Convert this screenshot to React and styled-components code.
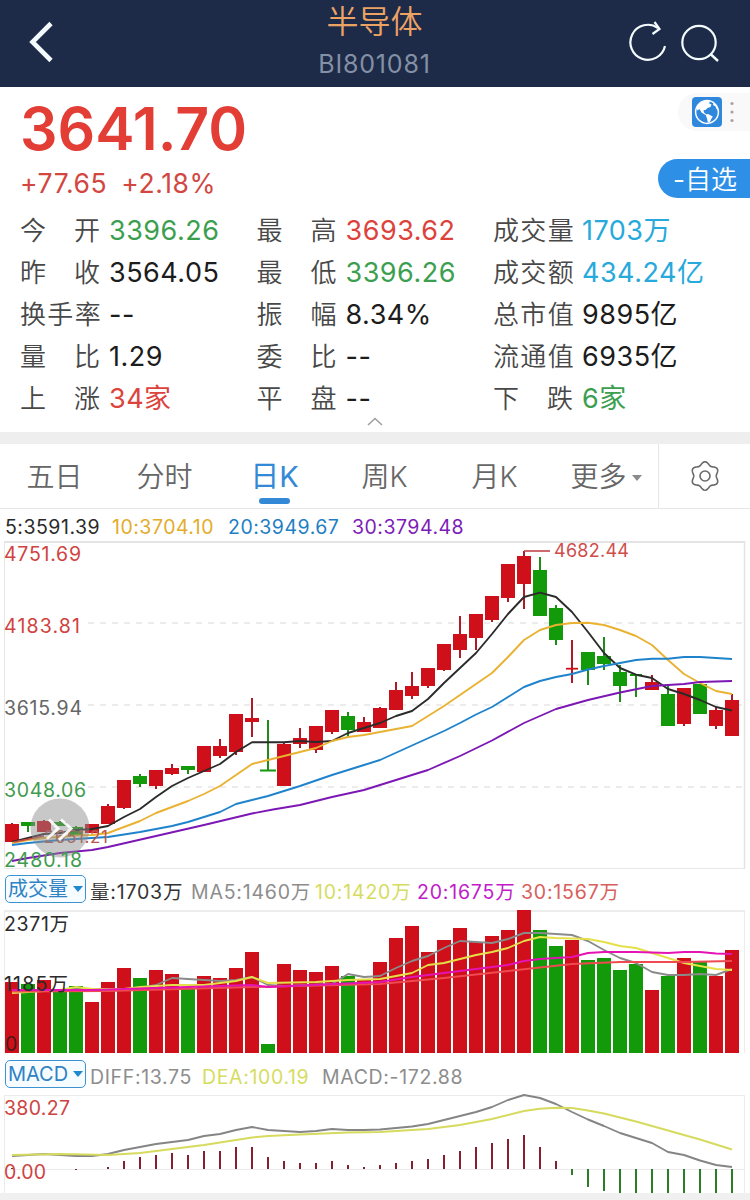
import React from "react";
import styled, { createGlobalStyle } from "styled-components";

const RED = "#cf0f19";
const GREEN = "#129a0a";

// [body top, body bottom, wick top, wick bottom, colour, body width]
const candles = [
  [824, 842, 823, 842, "r"],
  [822, 826, 822, 832, "g"],
  [821, 832, 820, 832, "r"],
  [822, 826, 821, 826, "g"],
  [827, 835, 826, 835, "g"],
  [824, 833, 824, 833, "r"],
  [806, 824, 804, 824, "r"],
  [780, 808, 780, 809, "r"],
  [776, 784, 774, 787, "g"],
  [770, 786, 770, 789, "r"],
  [768, 774, 764, 775, "r"],
  [766, 770, 766, 774, "g"],
  [746, 772, 746, 772, "r"],
  [746, 756, 739, 758, "r"],
  [714, 752, 714, 755, "r"],
  [718, 722, 698, 737, "r"],
  [769.5, 771.5, 720, 771, "g", 16],
  [744, 786, 742, 786, "r"],
  [738, 744, 728, 748, "r"],
  [726, 750, 726, 753, "r"],
  [710, 732, 710, 734, "r"],
  [716, 730, 712, 738, "g"],
  [722, 732, 717, 732, "r"],
  [708, 728, 707, 728, "r"],
  [690, 710, 682, 710, "r"],
  [686, 696, 672, 699, "r"],
  [668, 686, 668, 688, "r"],
  [644, 670, 644, 671, "r"],
  [634, 650, 616, 658, "r"],
  [614, 638, 614, 650, "r"],
  [596, 620, 596, 622, "r"],
  [564, 598, 564, 602, "r"],
  [556, 584, 551, 609, "r"],
  [570, 616, 557, 616, "g"],
  [608, 640, 605, 645, "g"],
  [667.8, 669.6, 640, 683, "r", 12],
  [652, 670, 652, 685, "g"],
  [656, 664, 637, 670, "g"],
  [672, 686, 665, 702, "g"],
  [674, 676, 674, 697, "g", 12],
  [682, 690, 675, 690, "r"],
  [694, 726, 684, 726, "g"],
  [688, 724, 688, 726, "r"],
  [684, 714, 684, 714, "g"],
  [710, 726, 707, 729, "r"],
  [700, 736, 694, 736, "r"],
];

const volumes = [
  982, 984, 980, 990, 986, 1002, 982, 968, 978, 970, 974, 988, 976, 978, 968,
  952, 1044, 964, 970, 972, 966, 976, 980, 962, 938, 926, 952, 940, 928, 942,
  936, 930, 910, 930, 946, 940, 960, 958, 970, 964, 990, 976, 958, 962, 976,
  950,
];

const macd = [
  1168, 1169, 1169, 1169, 1170, 1169, 1167, 1161, 1157, 1155, 1153, 1155, 1151,
  1151, 1147, 1147, 1157, 1161, 1163, 1163, 1161, 1165, 1167, 1165, 1163, 1161,
  1159, 1155, 1151, 1147, 1143, 1139, 1135, 1147, 1161, 1175, 1187, 1191, 1193,
  1193, 1193, 1193, 1193, 1193, 1193, 1193,
];

const priceLines = [
  {
    color: "#2b2b2b",
    points:
      "12,842 28,838 44,834 60,833 76,830 92,829 108,826 124,817 140,809 156,797 172,786 188,778 204,771 220,764 236,752 252,742.3 268,742.3 284,742.3 300,741 316,742 332,741 348,733 364,728 380,723 396,716 412,711 428,699 444,683 460,668 476,653 492,634 508,614 524,597 540,592.7 556,597 572,612 588,632 604,653 620,668 636,674.7 652,678 668,689 684,694 700,700 716,707 732,710.5",
  },
  {
    color: "#e9b232",
    points:
      "12,843 28,840 44,838 60,837 76,835.5 92,835 108,833 124,827 140,821 156,813 172,807 188,801 204,794 220,786 236,775 252,764 268,760 284,756 300,752 316,748 332,741 348,737 364,735 380,732 396,729 412,726 428,716 444,706 460,695 476,684 492,673 508,657 524,640 540,630 556,625 572,623 588,622.7 604,625 620,630 636,636 652,645 668,660 684,674 700,683 716,691 732,694",
  },
  {
    color: "#1f83cb",
    points:
      "12,845 28,843 60,840 92,838 108,837 140,832 172,826 188,822 220,812 236,804 252,800 268,796 284,791 300,786 332,775 348,770 364,765 380,760 412,745.5 444,731 460,723 476,714.5 492,707 508,697 524,687 540,681 556,677 572,674 588,669.5 604,666 620,663 636,660 652,658.7 668,658.7 684,657 700,657 716,658 732,659",
  },
  {
    color: "#7d17b4",
    points:
      "12,861 28,858 60,853 92,850 108,847 156,836 204,825 252,813.5 273,809.5 300,805 332,797 364,790 396,780 412,775 428,770 460,756 492,740.5 524,723 556,709 588,700 620,692.5 652,686 684,684 700,682 732,681",
  },
];

const volumeLines = [
  {
    color: "#8a8a8a",
    points:
      "12,991 60,991 76,989 92,990 108,991 140,988 156,985 172,978 204,980 220,981 236,980 252,977 268,985 284,986 332,984 348,974 364,977 380,976 396,968 412,961 428,956 444,948 460,941 476,942 492,943 508,939 524,933 540,933 556,934 572,935 588,941 604,950 620,958 636,963 652,972 668,975 684,975 700,974 716,975 732,969",
  },
  {
    color: "#e5e04a",
    points:
      "12,993 60,990 76,987 92,989 124,989 140,987 172,985 204,985 236,981 252,977 268,983 316,982 348,980 380,979 412,973 428,965 444,963 460,959 476,955 492,952 508,948 524,941 540,937 556,938 588,939 604,942 620,946 636,948 652,953 668,958 684,963 700,966 716,969 732,970",
  },
  {
    color: "#ef4a52",
    points:
      "12,991.5 108,991 252,987 380,984 444,978 508,971 572,964 620,962 684,962 732,961",
  },
  {
    color: "#e513b4",
    points:
      "12,990 92,990 252,985 268,987 380,982 412,977 444,973 476,969 508,965 524,961 540,959 572,957 588,953 604,952 636,952 668,953 684,952 700,952 716,953.5 732,954",
  },
];

const macdLines = [
  {
    color: "#858585",
    points:
      "12,1156 44,1154 76,1156 92,1156 108,1154 124,1150 140,1147 156,1144 172,1142 188,1140 204,1136 220,1134 236,1130 252,1127 268,1130 300,1132 316,1131 332,1129 348,1130 364,1130 380,1129.5 412,1126.5 428,1124 444,1120 476,1112 492,1107 508,1100 524,1095 540,1098 556,1104 572,1112 588,1119.5 604,1126 620,1133 636,1138 652,1143 668,1152 684,1155 700,1160.5 716,1165 732,1167",
  },
  {
    color: "#d6da5d",
    points:
      "12,1155 60,1154 108,1155 140,1153 172,1149 204,1145 236,1140 252,1137.5 268,1136 300,1134.5 348,1132.5 380,1132 428,1129 460,1125 492,1119 524,1111 540,1108.7 556,1107.7 572,1108 588,1110.5 604,1113.5 636,1121.5 668,1130.5 700,1139.5 732,1149.5",
  },
];

const quotes = [
  ["今 开", "3396.26", "green"],
  ["最 高", "3693.62", "red"],
  ["成 交 量", "1703万", "blue"],
  ["昨 收", "3564.05"],
  ["最 低", "3396.26", "green"],
  ["成 交 额", "434.24亿", "blue"],
  ["换 手 率", "--"],
  ["振 幅", "8.34%"],
  ["总 市 值", "9895亿"],
  ["量 比", "1.29"],
  ["委 比", "--"],
  ["流 通 值", "6935亿"],
  ["上 涨", "34家", "red"],
  ["平 盘", "--"],
  ["下 跌", "6家", "green"],
];

const valueColors = {
  red: "#dc433c",
  green: "#3c9f50",
  blue: "#28a9db",
};

const colX = (i) => 12 + i * 16;

const gearPoints = Array.from({ length: 72 }, (_, i) => {
  const a = (i * 5 * Math.PI) / 180;
  const r = 12.7 + 1.5 * Math.cos(6 * (a - Math.PI / 2));
  return `${(15 + r * Math.cos(a)).toFixed(2)},${(15 - r * Math.sin(a)).toFixed(2)}`;
}).join(" ");

function Lines({ data }) {
  return data.map((line) => (
    <polyline
      key={line.color}
      points={line.points}
      fill="none"
      stroke={line.color}
      strokeWidth="1.9"
      strokeLinejoin="round"
    />
  ));
}

function PriceChart() {
  return (
    <Chart height="330" viewBox="0 540 750 330">
      <path d="M4 542H745" stroke="#e4e4e4" strokeWidth="2" />
      <path d="M4.5 542V868.5H744.5" fill="none" stroke="#e8e8e8" />
      <path d="M744.5 541V869" stroke="#e4e4e4" strokeWidth="1.5" />
      {[623, 705, 787].map((y) => (
        <path key={y} d={`M88 ${y}H744`} stroke="#e6e6e6" strokeWidth="1.5" strokeDasharray="6 6" />
      ))}
      {candles.map(([top, bottom, high, low, c, w = 14], i) => {
        const fill = c === "r" ? RED : GREEN;
        return (
          <g key={i} fill={fill}>
            <rect x={colX(i) - 1} y={high} width="2" height={low - high} fill={c === "r" ? "#b01a24" : "#1f8c1a"} />
            <rect x={colX(i) - w / 2} y={top} width={w} height={bottom - top} />
          </g>
        );
      })}
      <Lines data={priceLines} />
      <path d="M524 551H550" stroke="#c2454a" strokeWidth="1.6" />
      <Label x="554" y="557" textLength="75" $size={18} fill="#cf4d49">4682.44</Label>
      <path d="M14 842L44 836" stroke="#c2454a" strokeWidth="1.4" />
      <Label x="44" y="843" textLength="64" $size={17} fill="#b8554f">2651.21</Label>
      <circle cx="60" cy="828" r="29.5" fill="#8c8c8c" fillOpacity="0.48" />
      <path d="M49 819.5L58 828.5L47 839M61 819.5L71 828.5L59 840" fill="none" stroke="#fff" strokeWidth="3" strokeOpacity="0.9" />
      <Label x="4" y="561" textLength="77" fill="#d0433f">4751.69</Label>
      <Label x="4" y="633" textLength="76" fill="#d0433f">4183.81</Label>
      <Label x="4" y="715" textLength="78" fill="#666">3615.94</Label>
      <Label x="4" y="797" textLength="82" fill="#3f9b50">3048.06</Label>
      <Label x="4" y="867" textLength="78" fill="#3f9b50">2480.18</Label>
    </Chart>
  );
}

function VolumeChart() {
  return (
    <Chart height="145" viewBox="0 910 750 145">
      <path d="M4 911H745" stroke="#ececec" strokeWidth="2" />
      <path d="M4.5 911V1053M744.5 911V1053" stroke="#ececec" />
      {volumes.map((y, i) => (
        <rect key={i} x={colX(i) - 7} y={y} width="14" height={1053 - y} fill={candles[i][4] === "r" ? RED : GREEN} />
      ))}
      <Lines data={volumeLines} />
      <Label x="4" y="931" textLength="65" fill="#2b2b2b">2371万</Label>
      <Label x="4" y="991" textLength="64" fill="#2b2b2b">1185万</Label>
      <Label x="5" y="1051" fill="#4a1a1a">0</Label>
    </Chart>
  );
}

function MacdChart() {
  return (
    <Chart height="99" viewBox="0 1094 750 99">
      <path d="M4 1095.5H745M4.5 1095V1193M744.5 1095V1193M4 1169.5H744" stroke="#ececec" />
      {macd.map((y, i) => (
        <rect
          key={i}
          x={colX(i) - 1}
          y={Math.min(y, 1169)}
          width="2"
          height={Math.abs(1169 - y)}
          fill={y > 1170 ? "#2c7c28" : "#84202f"}
        />
      ))}
      <Lines data={macdLines} />
      <Label x="4" y="1115" textLength="66" fill="#cc4441">380.27</Label>
      <Label x="4" y="1179" textLength="42" fill="#cc4441">0.00</Label>
    </Chart>
  );
}

function App() {
  return (
    <Page>
      <GlobalStyle />
      <Header>
        <svg width="32" height="44" viewBox="0 0 32 44">
          <path d="M27 3.5L8.5 22L27 40.5" fill="none" stroke="#f4fbff" strokeWidth="4.6" />
        </svg>
        <Heading>
          <Title>半导体</Title>
          <Code>BI801081</Code>
        </Heading>
        <svg width="92" height="44" viewBox="0 0 92 44">
          <g fill="none" stroke="#f4fbff" strokeWidth="2.2">
            <path d="M37 26A17.5 17.5 0 1 1 30 8" />
            <path d="M26.5 2L31.5 9L24.5 14" />
            <circle cx="71" cy="22.5" r="16.7" />
            <path d="M82.5 34L90 41" strokeWidth="2.4" />
          </g>
        </svg>
      </Header>
      <Summary>
        <div>
          <Price>3641.70</Price>
          <Change>
            <span>+77.65</span>
            <span>+2.18%</span>
          </Change>
        </div>
        <Side>
          <Widget>
            <Globe>
              <svg width="30" height="30" viewBox="0 0 30 30">
                <circle cx="15" cy="15" r="11.4" fill="none" stroke="#fff" strokeWidth="1.5" />
                <path d="M4.5 11Q7 5 13 3.7L18 4.2L17.2 6.5L19.5 7.5L18.5 10L15.5 11L13.5 13L11.5 13.2L12 15.5L14.5 17.5L13.2 17.8L9.5 15.5L7.5 12L5.5 13.5Z" fill="#fff" />
                <path d="M13.5 17.5L16 17L20.8 19.6L19.3 22L17.5 25.8L15.8 25.5L15 21.5Z" fill="#fff" />
                <path d="M21.5 6L25 9.5L26.3 14L24.5 12L23.5 9.5L21 8Z" fill="#fff" />
              </svg>
            </Globe>
            <svg width="4" height="22" viewBox="0 0 4 22" fill="#a9a3a3">
              <circle cx="2" cy="2.5" r="1.6" />
              <circle cx="2" cy="11" r="1.6" />
              <circle cx="2" cy="19.5" r="1.6" />
            </svg>
          </Widget>
          <Favorite>
            <b>-</b>自选
          </Favorite>
        </Side>
      </Summary>
      <Quotes>
        {quotes.map(([name, value, color], i) => (
          <Quote key={i}>
            <QuoteName>{name}</QuoteName>
            <QuoteValue $color={valueColors[color]}>{value}</QuoteValue>
          </Quote>
        ))}
      </Quotes>
      <Collapse>
        <svg width="16" height="9" viewBox="0 0 16 9">
          <path d="M1 8L8 1.5L15 8" fill="none" stroke="#a0a0a0" strokeWidth="1.6" />
        </svg>
      </Collapse>
      <Tabs>
        <Tab>五日</Tab>
        <Tab>分时</Tab>
        <Tab $active>日K</Tab>
        <Tab>周K</Tab>
        <Tab>月K</Tab>
        <Tab $more>
          更多
          <Caret $color="#8b8b8b" />
        </Tab>
        <Settings>
          <svg width="30" height="30" viewBox="0 0 30 30" fill="none" stroke="#6a6a6a" strokeWidth="1.6">
            <polygon points={gearPoints} strokeLinejoin="round" />
            <circle cx="15" cy="15" r="5" />
          </svg>
        </Settings>
      </Tabs>
      <Legend $height={31}>
        <Item $w={107} $color="#2b2b2b">5:3591.39</Item>
        <Item $w={116} $color="#e3ac2c">10:3704.10</Item>
        <Item $w={124} $color="#1f7fc4">20:3949.67</Item>
        <Item $color="#7e1cb8">30:3794.48</Item>
      </Legend>
      <PriceChart />
      <Legend $height={40} $spacing={0.8}>
        <Picker>
          成交量
          <Caret $color="#2187cf" />
        </Picker>
        <Item $w={101} $color="#333"><i>量</i>:1703万</Item>
        <Item $w={124} $color="#8d8d8d">MA5:1460万</Item>
        <Item $w={102} $color="#d6dc60">10:1420万</Item>
        <Item $w={104} $color="#c01cc8">20:1675万</Item>
        <Item $color="#d8605c">30:1567万</Item>
      </Legend>
      <VolumeChart />
      <Legend $height={39} $spacing={0.65}>
        <Picker>
          MACD
          <Caret $color="#2187cf" />
        </Picker>
        <Item $w={112} $color="#8d8d8d">DIFF:13.75</Item>
        <Item $w={120} $color="#d6dc60">DEA:100.19</Item>
        <Item $color="#8d8d8d">MACD:-172.88</Item>
      </Legend>
      <MacdChart />
      <Footer />
    </Page>
  );
}
export default App;

const GlobalStyle = createGlobalStyle`
  body {
    margin: 0;
    background: #fff;
  }
  * {
    box-sizing: border-box;
  }
  svg {
    display: block;
  }
`;
const Page = styled.div`
  width: 750px;
  height: 1200px;
  overflow: hidden;
  background: #fff;
  font-family: Inter, "Noto Sans CJK SC", sans-serif;
  font-weight: 400;
  line-height: 1.2;
  white-space: nowrap;
`;
const Header = styled.header`
  height: 87px;
  padding: 0 30px 3px 24px;
  display: grid;
  grid-template-columns: 92px 1fr 92px;
  align-items: center;
  background: #1d2b48;
`;
const Heading = styled.div`
  padding-left: 5px;
  text-align: center;
`;
const Title = styled.div`
  height: 42px;
  line-height: 44px;
  font-size: 32px;
  font-weight: 350;
  color: #eca265;
`;
const Code = styled.div`
  height: 42px;
  line-height: 45px;
  font-size: 25px;
  letter-spacing: 0.8px;
  color: #8490a5;
`;
const Summary = styled.section`
  height: 122px;
  padding-left: 20px;
  display: flex;
  justify-content: space-between;
`;
const Price = styled.div`
  height: 76px;
  line-height: 84px;
  font-size: 59px;
  font-weight: 600;
  color: #e23e36;
`;
const Change = styled.div`
  display: flex;
  gap: 14px;
  line-height: 40px;
  font-size: 26.5px;
  letter-spacing: 0.6px;
  color: #d2473f;
`;
const Side = styled.div`
  display: flex;
  flex-direction: column;
  align-items: flex-end;
  gap: 28px;
  padding-top: 6px;
`;
const Widget = styled.div`
  width: 72px;
  height: 38px;
  padding-left: 14px;
  display: flex;
  align-items: center;
  gap: 8px;
  border-radius: 19px 0 0 19px;
  background: #f9f9f9;
`;
const Globe = styled.div`
  width: 30px;
  height: 30px;
  border-radius: 4px;
  background: #2f88db;
`;
const Favorite = styled.div`
  width: 92px;
  height: 39px;
  padding-left: 15px;
  line-height: 41px;
  border-radius: 20px 0 0 20px;
  background: #2d90e6;
  color: #fff;
  font-size: 26px;
  font-weight: 350;
  b {
    font-weight: 400;
  }
`;
const Quotes = styled.section`
  height: 208px;
  padding: 1px 0 0 20px;
  display: grid;
  grid-template-columns: 236.5px 236.5px 1fr;
  grid-auto-rows: 42px;
`;
const Quote = styled.div`
  display: flex;
  align-items: center;
  height: 42px;
`;
const QuoteName = styled.span`
  width: 80px;
  font-size: 26px;
  font-weight: 350;
  word-spacing: -6px;
  text-align-last: justify;
  color: #484848;
`;
const QuoteValue = styled.span`
  margin-left: 9px;
  font-size: 27px;
  letter-spacing: 0.5px;
  color: ${(p) => p.$color || "#1c1c1c"};
`;
const Collapse = styled.div`
  height: 27px;
  display: flex;
  justify-content: center;
  border-bottom: 12px solid #eeeeee;
`;
const Tabs = styled.nav`
  height: 65px;
  display: grid;
  grid-template-columns: repeat(5, 110px) 108px 92px;
  border-bottom: 1px solid #e6e6e6;
`;
const Tab = styled.div`
  position: relative;
  display: flex;
  align-items: center;
  justify-content: center;
  padding: 3px ${(p) => (p.$more ? 0 : 1)}px 0 ${(p) => (p.$more ? 4 : 0)}px;
  font-size: ${(p) => (p.$active ? 29 : 28)}px;
  font-weight: ${(p) => (p.$active ? 400 : 350)};
  color: ${(p) => (p.$active ? "#3389d6" : "#666")};
  &::after {
    content: "";
    display: ${(p) => (p.$active ? "block" : "none")};
    position: absolute;
    bottom: 4px;
    width: 31px;
    height: 6px;
    border-radius: 3px;
    background: #3389d6;
  }
`;
const Caret = styled.i`
  margin-left: 5px;
  border: 5.5px solid transparent;
  border-top: 6px solid ${(p) => p.$color};
  border-bottom: 0;
`;
const Settings = styled.div`
  display: grid;
  place-items: center;
  border-left: 1px solid #e6e6e6;
`;
const Legend = styled.div`
  height: ${(p) => p.$height}px;
  padding-left: 5px;
  display: flex;
  align-items: center;
  font-size: 19.5px;
  letter-spacing: ${(p) => p.$spacing || 0.5}px;
`;
const Item = styled.span`
  width: ${(p) => (p.$w ? p.$w + "px" : "auto")};
  padding-top: 6px;
  color: ${(p) => p.$color};
  i {
    font-style: normal;
    font-weight: 350;
  }
`;
const Picker = styled.div`
  width: 81px;
  height: 28px;
  margin: 0 4px 2px 0;
  display: flex;
  align-items: center;
  justify-content: center;
  border: 1.5px solid #3c93cf;
  border-radius: 5px;
  background: #f6fcff;
  color: #2f83c4;
  font-size: 20px;
  letter-spacing: 0;
`;
const Chart = styled.svg`
  width: 750px;
  overflow: visible;
`;
const Label = styled.text`
  font-family: Inter, "Noto Sans CJK SC", sans-serif;
  font-size: ${(p) => p.$size || 19.5}px;
`;
const Footer = styled.div`
  height: 8px;
  background: #f0f0f0;
`;
